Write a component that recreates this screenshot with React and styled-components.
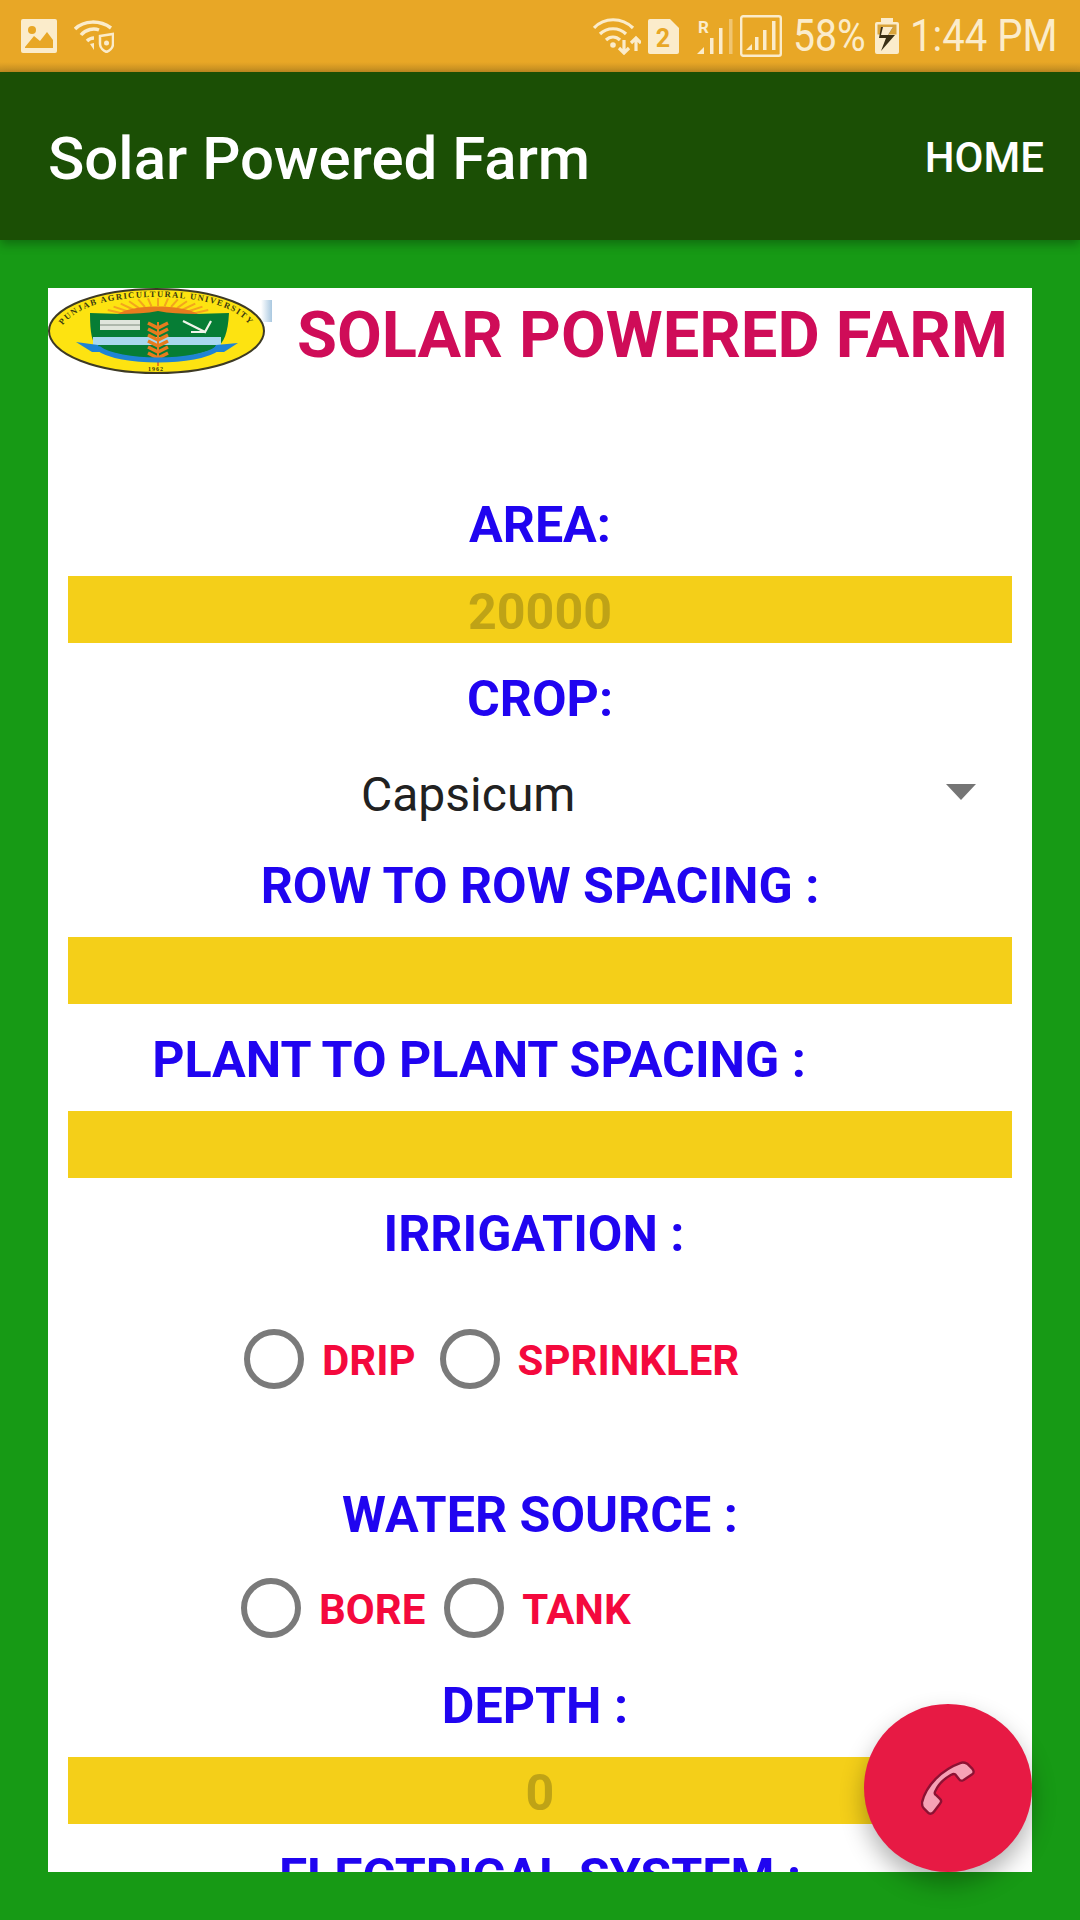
import React from "react";
import styled, { createGlobalStyle } from "styled-components";

const GlobalStyle = createGlobalStyle`
  html, body {
    margin: 0;
    padding: 0;
    background: #179a15;
    font-family: Roboto, "Liberation Sans", sans-serif;
  }
  * { box-sizing: border-box; }
`;

const Screen = styled.div`
  width: 1080px;
  height: 1920px;
  position: relative;
  overflow: hidden;
  display: flex;
  flex-direction: column;
  background: #179a15;
`;

const StatusBar = styled.div`
  height: 72px;
  flex: none;
  background: linear-gradient(#e8a726 0, #e8a726 62px, #c48e22 72px);
  color: #fbeccb;
  display: flex;
  align-items: center;
  padding: 0 24px 0 21px;
`;

const StatusLeft = styled.div`
  display: flex;
  align-items: center;
  gap: 17px;
`;

const StatusRight = styled.div`
  margin-left: auto;
  display: flex;
  align-items: center;
`;

const StatusSlot = styled.span`
  height: 42px;
  margin-left: ${(p) => p.$left || 0}px;
  display: flex;
  align-items: center;
`;

// the phone's status font is a narrow one, so Roboto gets squeezed to its width
const StatusText = styled.span`
  display: block;
  width: ${(p) => p.$width}px;
  margin-left: ${(p) => p.$left}px;
  font-size: 45px;
  font-weight: 400;
  line-height: 72px;
  white-space: nowrap;
  transform: scaleX(${(p) => p.$squeeze});
  transform-origin: left center;
`;

const AppBar = styled.div`
  height: 168px;
  flex: none;
  background: #1b4f05;
  display: flex;
  align-items: center;
  justify-content: space-between;
  padding: 0 36px 0 48px;
  box-shadow: 0 4px 10px rgba(0, 0, 0, 0.3);
  position: relative;
  z-index: 1;
`;

const AppTitle = styled.div`
  color: #fff;
  font-size: 60px;
  font-weight: 500;
  margin-top: 4px;
`;

const HomeAction = styled.div`
  color: #fff;
  font-size: 42px;
  font-weight: 500;
  margin-top: 2px;
`;

const Card = styled.div`
  margin: 48px;
  flex: 1;
  min-height: 0;
  background: #fff;
  overflow: hidden;
  padding: 0 20px;
  display: flex;
  flex-direction: column;

  & > * {
    flex: none;
  }
`;

const Header = styled.div`
  height: 90px;
  margin: 0 -20px;
  display: flex;
  align-items: flex-start;
`;

const Heading = styled.div`
  color: #cf0c58;
  font-size: 65px;
  font-weight: 700;
  line-height: 94px;
  margin-left: 23px;
  white-space: nowrap;
`;

const Label = styled.div`
  color: #2004f0;
  font-size: 50.2px;
  font-weight: 700;
  line-height: 60px;
  text-align: center;
  margin-top: ${(p) => p.$top || 0}px;
  transform: translateX(${(p) => p.$shift || 0}px);
  white-space: nowrap;
`;

const Field = styled.div`
  height: 67px;
  background: #f4cf19;
  color: #bfa316;
  font-size: 50.2px;
  font-weight: 700;
  line-height: 72px;
  text-align: center;
  margin-top: ${(p) => p.$top || 0}px;
`;

const Spinner = styled.div`
  height: 127px;
  padding: 4px 0 0 293px;
  display: flex;
  align-items: center;
  position: relative;
  color: #212121;
  font-size: 48px;
`;

const Caret = styled.span`
  position: absolute;
  right: 36px;
  top: 55px;
  width: 0;
  height: 0;
  border-left: 15px solid transparent;
  border-right: 15px solid transparent;
  border-top: 16px solid #757575;
`;

const RadioRow = styled.div`
  display: flex;
  align-items: center;
  height: 60px;
  margin-top: ${(p) => p.$top}px;
  padding-left: ${(p) => p.$left}px;
`;

const RadioCircle = styled.span`
  width: 60px;
  height: 60px;
  border-radius: 50%;
  border: 6px solid #7a7a7a;
  flex: none;
`;

const RadioText = styled.span`
  color: #f4093d;
  font-size: 42px;
  font-weight: 700;
  margin: 2px ${(p) => p.$right || 0}px 0 18px;
`;

const Fab = styled.div`
  position: absolute;
  left: 864px;
  top: 1704px;
  width: 168px;
  height: 168px;
  border-radius: 50%;
  background: #e71a44;
  display: flex;
  align-items: center;
  justify-content: center;
  box-shadow: 0 12px 24px rgba(0, 0, 0, 0.3);
`;

const ImageIcon = () => (
  <svg width="36" height="34" viewBox="0 0 36 34">
    <rect width="36" height="34" rx="2" fill="#fbeccb" />
    <circle cx="11" cy="11" r="4" fill="#e8a726" />
    <path d="M4 28 L13 17 L19 22 L26 13 L32 21 V29 H4 Z" fill="#e8a726" />
  </svg>
);

const WifiShield = () => (
  <svg width="40" height="34" viewBox="0 0 40 34" fill="none" stroke="#fbeccb" strokeWidth="3.5">
    <path d="M1 10 C10 1 26 1 37 9" />
    <path d="M7 16 C12 10 20 9 25 11" />
    <path d="M13 22 C15 20 17 19 20 19" />
    <path d="M16 25 L20 31 L20 24 Z" fill="#fbeccb" stroke="none" />
    <path d="M26 17 L39 15 V25 C39 29 35 32 32.5 33 C30 32 26 29 26 25 Z" strokeWidth="2.5" />
    <circle cx="32.5" cy="24" r="2.5" fill="#fbeccb" stroke="none" />
  </svg>
);

const WifiData = () => (
  <svg width="48" height="38" viewBox="0 0 48 38" fill="none" stroke="#fbeccb" strokeWidth="3.2">
    <path d="M1 11 C11 0 29 0 40 11" />
    <path d="M7 17 C14 10 26 10 33 17" />
    <path d="M13 23 C17 19 23 19 27 23" />
    <circle cx="20" cy="28" r="2.8" fill="#fbeccb" stroke="none" />
    <path d="M31 23 V36 M26 31 L31 36 L36 31" />
    <path d="M43 34 V21 M38 26 L43 21 L48 26" />
  </svg>
);

const SimTwo = () => (
  <svg width="31" height="35" viewBox="0 0 31 35">
    <path d="M2 0 H22 L31 9 V33 a2 2 0 0 1 -2 2 H2 a2 2 0 0 1 -2 -2 V2 a2 2 0 0 1 2 -2 Z" fill="#fbeccb" />
    <text x="15" y="28" textAnchor="middle" fontSize="25" fontWeight="700" fontFamily="Roboto" fill="#e8a726">2</text>
  </svg>
);

const Signal = () => (
  <svg width="36" height="37" viewBox="0 0 36 37">
    <text x="1" y="15" fontSize="17" fontWeight="700" fontFamily="Roboto" fill="#fbeccb">R</text>
    <path d="M0 36 L7 36 L7 29 Z" fill="#fbeccb" />
    <rect x="13" y="20" width="3.5" height="16" fill="#fbeccb" />
    <rect x="22" y="10" width="3.5" height="26" fill="#fbeccb" />
    <rect x="32" y="1" width="3.5" height="35" fill="#fbeccb" opacity="0.45" />
  </svg>
);

const SignalBox = () => (
  <svg width="42" height="42" viewBox="0 0 42 42" fill="#fbeccb">
    <rect x="1.2" y="1.2" width="39.6" height="39.6" rx="2" fill="none" stroke="#fbeccb" strokeWidth="2.4" />
    <path d="M6 35 L12 35 L12 29 Z" />
    <rect x="15" y="22" width="3.5" height="13" />
    <rect x="23" y="15" width="3.5" height="20" />
    <rect x="32" y="6" width="3.5" height="29" />
  </svg>
);

const Battery = () => (
  <svg width="24" height="36" viewBox="0 0 24 36">
    <path d="M6 0 H18 V4 H22 a2 2 0 0 1 2 2 V34 a2 2 0 0 1 -2 2 H2 a2 2 0 0 1 -2 -2 V6 a2 2 0 0 1 2 -2 H6 Z" fill="#fbeccb" />
    <rect x="2.5" y="6.5" width="19" height="10" fill="#d9a43a" />
    <path d="M18 9 L6 9 L4 20 L11 20 L6 33 L20 17 L13 17 Z" fill="#3a2f14" />
    <path d="M18 9 L8 9 L6 17 L13 17 Z" fill="#fbeccb" />
  </svg>
);

const PhoneIcon = () => (
  <svg width="55" height="55" viewBox="0 0 58 58">
    <path
      d="M42 2 C44 1 47 2 49 3 L54 8 C56 10 56 13 54 14 L45 20 C43 21 41 21 40 19 L36 14 C34 13 33 14 31 15 C24 19 18 25 15 32 C14 34 14 35 16 36 L20 40 C22 42 21 44 20 45 L14 53 C12 56 10 56 8 55 L3 50 C1 48 1 46 1 44 C5 26 22 9 42 2 Z"
      fill="#f6a2b6"
      stroke="#8c1233"
      strokeWidth="2.5"
      strokeLinejoin="round"
    />
  </svg>
);

const rays = Array.from({ length: 13 }, (_, i) => -150 + i * 10);
const grains = [38, 44, 50, 56, 62, 68];

// Crest is only a small bitmap in the screenshot, so it is redrawn with plain shapes
const Crest = () => (
  <svg width="226" height="90" viewBox="0 0 226 90">
    <defs>
      <linearGradient id="corner" x1="0" x2="1">
        <stop offset="0" stopColor="#fff" />
        <stop offset="1" stopColor="#a9c8e0" />
      </linearGradient>
      <path id="rim" d="M10 47 C18 20 60 9 108 9 C156 9 198 20 207 47" fill="none" />
    </defs>
    <rect x="213" y="12" width="11" height="22" fill="url(#corner)" />
    <ellipse cx="108.5" cy="43" rx="107.5" ry="42" fill="#fde311" stroke="#3d3a24" strokeWidth="2" />
    {rays.map((a) => (
      <line
        key={a}
        x1={110 + Math.cos((a * Math.PI) / 180) * 38}
        y1={34 + Math.sin((a * Math.PI) / 180) * 16}
        x2={110 + Math.cos((a * Math.PI) / 180) * 58}
        y2={34 + Math.sin((a * Math.PI) / 180) * 24}
        stroke="#f3a51e"
        strokeWidth="2"
      />
    ))}
    <path d="M70 26 C84 16 134 16 150 26 Z" fill="#e87c1e" />
    <path d="M42 25 C65 26 90 27 110 23 C130 27 155 26 181 25 C180 45 176 55 168 60 C150 68 125 70 110 74 C95 70 70 68 50 60 C44 55 42 45 42 25 Z" fill="#067d35" />
    <rect x="45" y="49" width="128" height="8" fill="#a8d8ef" />
    <rect x="52" y="32" width="40" height="10" fill="#dfe5dc" />
    <path d="M52 37 H92" stroke="#7c8a7c" strokeWidth="1" />
    <path d="M135 33 L157 44 L163 33 M157 44 H143" stroke="#f0f4ea" strokeWidth="2.2" fill="none" />
    <path d="M110 34 V78" stroke="#e87c1e" strokeWidth="2" />
    {grains.map((y) => (
      <path key={y} d={`M100 ${y - 3} L110 ${y + 2} L120 ${y - 3}`} stroke="#e87c1e" strokeWidth="3.5" fill="none" />
    ))}
    <path d="M50 60 C70 76 150 76 170 60" stroke="#1f84d4" strokeWidth="5" fill="none" />
    <path d="M28 54 L50 57 L54 64 L44 64 Z" fill="#1f84d4" />
    <path d="M190 55 L168 57 L164 64 L176 64 Z" fill="#1f84d4" />
    <text fontSize="8.5" fontWeight="700" fontFamily="Liberation Serif" fill="#3a3a10" letterSpacing="1.4" textAnchor="middle">
      <textPath href="#rim" startOffset="50%">PUNJAB AGRICULTURAL UNIVERSITY</textPath>
    </text>
    <text x="108" y="83" textAnchor="middle" fontSize="6" fontWeight="700" fontFamily="Liberation Serif" fill="#3a3a10" letterSpacing="1">1962</text>
  </svg>
);

export default function App() {
  return (
    <Screen>
      <GlobalStyle />
      <StatusBar>
        <StatusLeft>
          <ImageIcon />
          <WifiShield />
        </StatusLeft>
        <StatusRight>
          <StatusSlot><WifiData /></StatusSlot>
          <StatusSlot $left={7}><SimTwo /></StatusSlot>
          <StatusSlot $left={18}><Signal /></StatusSlot>
          <StatusSlot $left={7}><SignalBox /></StatusSlot>
          <StatusText $left={11} $width={71} $squeeze={0.87}>58%</StatusText>
          <StatusSlot $left={11}><Battery /></StatusSlot>
          <StatusText $left={11} $width={146} $squeeze={0.89}>1:44 PM</StatusText>
        </StatusRight>
      </StatusBar>
      <AppBar>
        <AppTitle>Solar Powered Farm</AppTitle>
        <HomeAction>HOME</HomeAction>
      </AppBar>
      <Card>
        <Header>
          <Crest />
          <Heading>SOLAR POWERED FARM</Heading>
        </Header>
        <Label $top={117}>AREA:</Label>
        <Field $top={21}>20000</Field>
        <Label $top={26}>CROP:</Label>
        <Spinner>
          Capsicum
          <Caret />
        </Spinner>
        <Label>ROW TO ROW SPACING :</Label>
        <Field $top={21} />
        <Label $top={26} $shift={-61}>PLANT TO PLANT SPACING :</Label>
        <Field $top={21} />
        <Label $top={26} $shift={-6}>IRRIGATION :</Label>
        <RadioRow $top={65} $left={176}>
          <RadioCircle />
          <RadioText $right={24}>DRIP</RadioText>
          <RadioCircle />
          <RadioText>SPRINKLER</RadioText>
        </RadioRow>
        <Label $top={96}>WATER SOURCE :</Label>
        <RadioRow $top={33} $left={173}>
          <RadioCircle />
          <RadioText $right={19}>BORE</RadioText>
          <RadioCircle />
          <RadioText>TANK</RadioText>
        </RadioRow>
        <Label $top={38} $shift={-5}>DEPTH :</Label>
        <Field $top={21}>0</Field>
        <Label $top={23}>ELECTRICAL SYSTEM :</Label>
      </Card>
      <Fab>
        <PhoneIcon />
      </Fab>
    </Screen>
  );
}
